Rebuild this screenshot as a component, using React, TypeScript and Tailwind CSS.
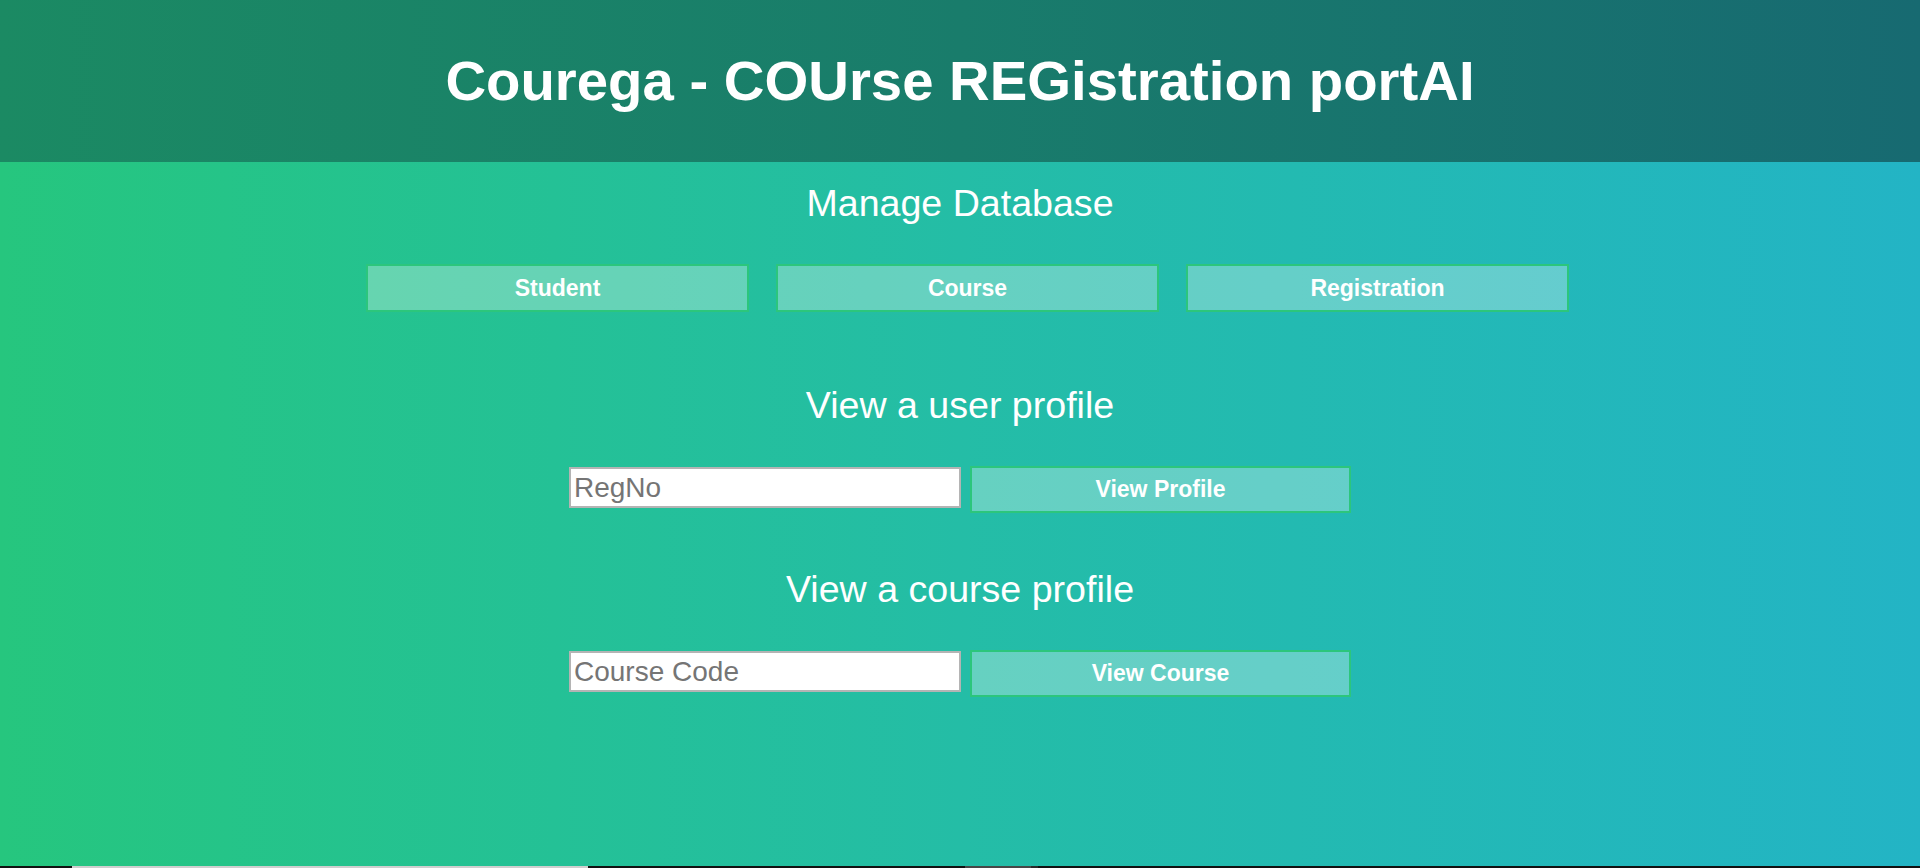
import React from 'react';

const font = { fontFamily: '"Liberation Sans", Arial, sans-serif' };

const MenuButton: React.FC<{ label: string }> = ({ label }) => (
  <button className="w-[383px] h-[48px] border-2 border-[#2cc67c] bg-white/30 text-white font-bold text-[23px]">
    {label}
  </button>
);

const LookupRow: React.FC<{ placeholder: string; action: string }> = ({ placeholder, action }) => (
  <div className="flex justify-center items-start gap-[9px]">
    <input
      type="text"
      placeholder={placeholder}
      className="w-[392px] h-[41px] mt-[1px] bg-white border-2 border-[#b4b4b4] px-[3px] text-[28px] text-black placeholder:text-[#757575] outline-none"
    />
    <button className="w-[381px] h-[47px] border-2 border-[#2cc67c] bg-white/30 text-white font-bold text-[23px]">
      {action}
    </button>
  </div>
);

export default function App() {
  return (
    <div className="w-[1920px] h-[868px] overflow-hidden flex flex-col" style={font}>
      <div className="flex-1 flex flex-col bg-gradient-to-r from-[#26c67e] via-[#24bda6] to-[#23b4c5]">
        {/* Header */}
        <header className="h-[162px] flex items-center justify-center bg-gradient-to-r from-[#1b8a63] via-[#197c6b] to-[#176a71]">
          <h1 className="text-white font-bold text-[56.3px] leading-none">Courega - COUrse REGistration portAI</h1>
        </header>

        <main className="flex flex-col items-center text-white">
          <h2 className="mt-[20px] text-[37.6px] leading-[42px]">Manage Database</h2>
          <div className="mt-[40px] flex gap-[27px] pl-[15px]">
            <MenuButton label="Student" />
            <MenuButton label="Course" />
            <MenuButton label="Registration" />
          </div>

          <h2 className="mt-[72px] text-[37.6px] leading-[42px]">View a user profile</h2>
          <div className="mt-[40px]">
            <LookupRow placeholder="RegNo" action="View Profile" />
          </div>

          <h2 className="mt-[55px] text-[37.6px] leading-[42px]">View a course profile</h2>
          <div className="mt-[40px]">
            <LookupRow placeholder="Course Code" action="View Course" />
          </div>
        </main>
      </div>

      {/* scrollbar strip at the bottom edge */}
      <div className="h-[2px] flex bg-[#111]">
        <div className="w-[72px]" />
        <div className="w-[516px] bg-[#cfcfcf]" />
        <div className="w-[377px]" />
        <div className="w-[66px] bg-[#474747]" />
        <div className="w-[7px] bg-[#2a2a2a]" />
      </div>
    </div>
  );
}
